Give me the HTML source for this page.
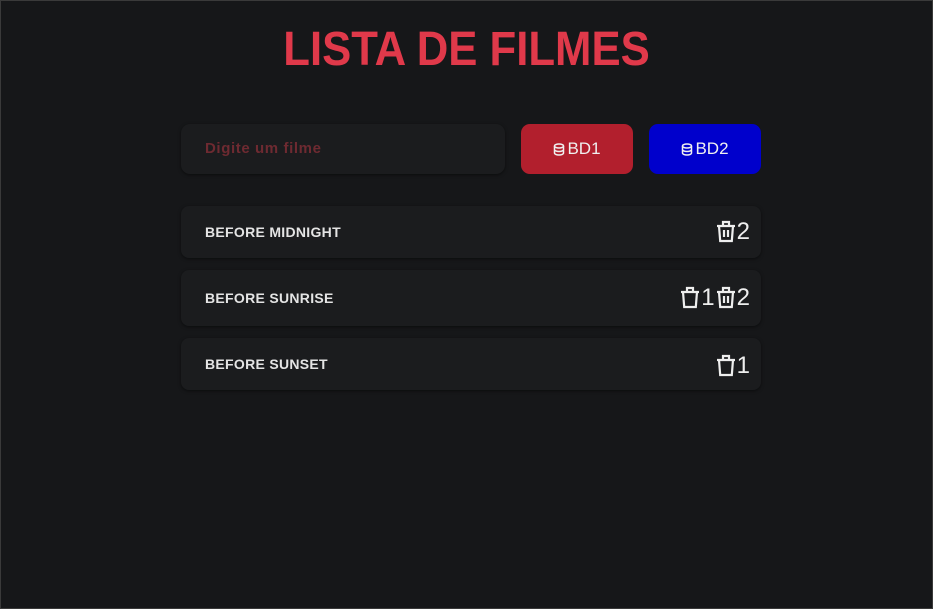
<!DOCTYPE html>
<html><head><style>
html,body{margin:0;padding:0}
body{width:931px;height:607px;background:#161719;border:1px solid #3a3a3a;position:relative;font-family:"Liberation Sans",sans-serif;overflow:hidden}
h1{position:absolute;left:0;width:931px;top:23px;margin:0;text-align:center;color:#e0394a;font-size:48px;font-weight:bold;line-height:52px;transform:scaleX(0.91)}
.in{position:absolute;left:180px;top:123px;width:324px;height:50px;background:#1b1c1e;border-radius:9px;box-shadow:0 1px 3px rgba(0,0,0,.5)}
.in span{position:absolute;left:24px;top:16px;font-size:15px;font-weight:bold;color:#6e2a31;letter-spacing:0.6px}
.b{position:absolute;top:123px;width:112px;height:50px;border-radius:9px;color:#f0f0f0;font-size:17px;display:flex;align-items:center;justify-content:center}
.b svg{margin-right:2px}
.c{position:absolute;left:180px;width:580px;background:#1b1c1e;border-radius:8px;box-shadow:0 1px 3px rgba(0,0,0,.5)}
.c .t{position:absolute;left:24px;font-size:14px;font-weight:bold;color:#e4e4e4;top:50%;transform:translateY(-50%);letter-spacing:0.3px}
.c .r{position:absolute;right:11px;top:50%;transform:translateY(-50%);display:flex;align-items:center;color:#eee;font-size:24px}
</style></head><body>
<h1>LISTA DE FILMES</h1>
<div class="in"><span>Digite um filme</span></div>
<div class="b" style="left:520px;background:#b21f2d"><svg width="12" height="13" viewBox="0 0 12 13" fill="none" stroke="#f0f0f0" stroke-width="1.5"><ellipse cx="6" cy="3" rx="4.5" ry="2"/><path d="M1.5 3v7c0 1.1 2 2 4.5 2s4.5-.9 4.5-2V3M1.5 6.5c0 1.1 2 2 4.5 2s4.5-.9 4.5-2"/></svg>BD1</div>
<div class="b" style="left:648px;background:#0000cc"><svg width="12" height="13" viewBox="0 0 12 13" fill="none" stroke="#f0f0f0" stroke-width="1.5"><ellipse cx="6" cy="3" rx="4.5" ry="2"/><path d="M1.5 3v7c0 1.1 2 2 4.5 2s4.5-.9 4.5-2V3M1.5 6.5c0 1.1 2 2 4.5 2s4.5-.9 4.5-2"/></svg>BD2</div>

<div class="c" style="top:205px;height:52px"><span class="t">BEFORE MIDNIGHT</span>
<div class="r"><svg width="22" height="24" viewBox="0 0 22 24" fill="none" stroke="#eee" stroke-width="2.2"><path d="M8 5V2h6v3M2 6h18M4 6l1.2 15h11.6L18 6M9 10v7M13 10v7"/></svg>2</div></div>

<div class="c" style="top:269px;height:56px"><span class="t">BEFORE SUNRISE</span>
<div class="r"><svg width="22" height="24" viewBox="0 0 22 24" fill="none" stroke="#eee" stroke-width="2.2"><path d="M8 5V2h6v3M2 6h18M4 6l1.2 15h11.6L18 6"/></svg>1<svg width="22" height="24" viewBox="0 0 22 24" fill="none" stroke="#eee" stroke-width="2.2"><path d="M8 5V2h6v3M2 6h18M4 6l1.2 15h11.6L18 6M9 10v7M13 10v7"/></svg>2</div></div>

<div class="c" style="top:337px;height:52px"><span class="t">BEFORE SUNSET</span>
<div class="r" style="margin-top:2px"><svg width="22" height="24" viewBox="0 0 22 24" fill="none" stroke="#eee" stroke-width="2.2"><path d="M8 5V2h6v3M2 6h18M4 6l1.2 15h11.6L18 6"/></svg>1</div></div>
</body></html>
